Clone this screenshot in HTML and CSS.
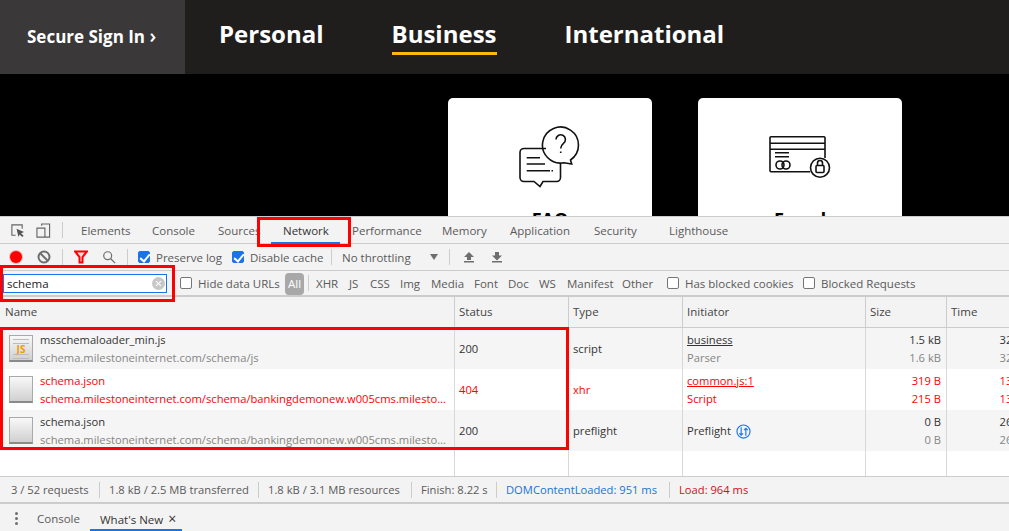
FILE: index.html
```html
<!DOCTYPE html>
<html lang="en">
<head>
    <meta charset="UTF-8">
    <meta name="viewport" content="width=device-width, initial-scale=1.0">
    <title>Schema network request</title>
    <link rel="stylesheet" href="styles.css">
</head>
<body>
    <div class="site">
        <header class="site-header">
            <a class="sign-in">Secure Sign In <span class="sign-in-arrow">&#8250;</span></a>
            <nav class="site-nav">
                <a>Personal</a>
                <a class="current">Business</a>
                <a>International</a>
            </nav>
        </header>
        <div class="cards">
            <div class="card">
                <svg class="card-icon" viewBox="0 0 62 62">
                    <path d="M27 22.5H5a4 4 0 0 0-4 4V51.500a4 4 0 0 0 4 4H15L21 60.500 24 55.500H37.500a4 4 0 0 0 4-4V37"/>
                    <path d="M52.700 38 51.500 34A18 18 0 1 0 45 36.700Z"/>
                    <path d="M37 13.500a4.700 4.700 0 1 1 7.500 3.800C42.500 18.800 41.700 19.800 41.700 22.500M41.700 25.500V27"/>
                    <path d="M7.700 31.700H21M7.700 38H26M7.700 44.700H31M32.500 44.700H34"/>
                </svg>
                <div class="card-title">FAQ</div>
            </div>
            <div class="card">
                <svg class="card-icon" viewBox="0 -9 62 62">
                    <path d="M41 36.700H2a1 1 0 0 1-1-1V2.700a1 1 0 0 1 1-1H55a1 1 0 0 1 1 1V23"/>
                    <path d="M1 8.300H56M1 14.300H56M6 17.700H20M6 21.700H20"/>
                    <circle cx="11" cy="30" r="4"/>
                    <circle cx="17" cy="30" r="4"/>
                    <circle cx="51" cy="32.700" r="9.500"/>
                    <rect x="47" y="30.500" width="8" height="7" rx="1"/>
                    <path d="M48.500 30.500V28a2.500 2.500 0 0 1 5 0V30.500"/>
                </svg>
                <div class="card-title">Fraud</div>
            </div>
        </div>
    </div>

    <div class="devtools">
        <div class="tab-row">
            <div class="tab-tools">
                <svg class="tool" viewBox="0 0 16 16">
                    <path class="line-gray" d="M6 13H2V2H13V6"/>
                    <path class="fill-gray" d="M7 6 15 9.500 11.800 10.800 14.500 13.500 13 15 10.300 12.300 9 15Z"/>
                </svg>
                <svg class="tool" viewBox="0 0 16 16">
                    <path class="line-gray" d="M6 3V1H14.500V15H6M1 5.500H9.500V15H1Z"/>
                </svg>
                <span class="sep"></span>
            </div>
            <div class="tabs">
                <span>Elements</span>
                <span>Console</span>
                <span>Sources</span>
                <span class="tab-active">Network</span>
                <span>Performance</span>
                <span>Memory</span>
                <span>Application</span>
                <span>Security</span>
                <span>Lighthouse</span>
            </div>
        </div>

        <div class="toolbar">
            <span class="record"></span>
            <svg class="clear-log" viewBox="0 0 14 14">
                <circle cx="7" cy="7" r="5.500"/>
                <path d="M3 3 11 11"/>
            </svg>
            <span class="sep sep-a"></span>
            <svg class="funnel" viewBox="0 0 14 14">
                <path d="M1 1.500H13L8.500 7V12.500H5.500V7Z"/>
            </svg>
            <svg class="search" viewBox="0 0 16 16">
                <circle cx="6.500" cy="6.500" r="4.500"/>
                <path d="M10 10 15 15"/>
            </svg>
            <span class="sep sep-b"></span>
            <label class="check check-preserve"><span class="box checked"></span>Preserve log</label>
            <label class="check check-cache"><span class="box checked"></span>Disable cache</label>
            <span class="sep sep-c"></span>
            <span class="throttle">No throttling</span>
            <span class="throttle-arrow"></span>
            <span class="sep sep-d"></span>
            <svg class="transfer" viewBox="0 0 12 12"><path d="M6 1 11 6H8V9H4V6H1ZM1 10H11V11.500H1Z"/></svg>
            <svg class="transfer transfer-down" viewBox="0 0 12 12"><path d="M4 1H8V4.500H11L6 9.500 1 4.500H4ZM1 10H11V11.500H1Z"/></svg>
        </div>

        <div class="filter-row">
            <div class="filter-input">schema<span class="filter-clear"></span></div>
            <label class="check check-hide"><span class="box"></span>Hide data URLs</label>
            <span class="pill">All</span>
            <span class="sep"></span>
            <div class="types">
                <span>XHR</span>
                <span>JS</span>
                <span>CSS</span>
                <span>Img</span>
                <span>Media</span>
                <span>Font</span>
                <span>Doc</span>
                <span>WS</span>
                <span>Manifest</span>
                <span>Other</span>
            </div>
            <label class="check check-cookies"><span class="box"></span>Has blocked cookies</label>
            <label class="check"><span class="box"></span>Blocked Requests</label>
        </div>

        <div class="net-table">
            <div class="net-row net-head">
                <div class="name-head">Name</div>
                <div>Status</div>
                <div>Type</div>
                <div>Initiator</div>
                <div>Size</div>
                <div>Time</div>
            </div>

            <div class="net-row alt">
                <div class="name-cell">
                    <span class="file-icon js-file"><span class="js-label">JS</span></span>
                    <div class="two-line">
                        <span>msschemaloader_min.js</span>
                        <span class="sub">schema.milestoneinternet.com/schema/js</span>
                    </div>
                </div>
                <div class="mid">200</div>
                <div class="mid">script</div>
                <div class="two-line">
                    <span class="link">business</span>
                    <span class="sub">Parser</span>
                </div>
                <div class="two-line num">
                    <span>1.5 kB</span>
                    <span class="sub">1.6 kB</span>
                </div>
                <div class="two-line num">
                    <span>32 ms</span>
                    <span class="sub">32 ms</span>
                </div>
            </div>

            <div class="net-row failed">
                <div class="name-cell">
                    <span class="file-icon"></span>
                    <div class="two-line">
                        <span>schema.json</span>
                        <span class="sub">schema.milestoneinternet.com/schema/bankingdemonew.w005cms.milestone</span>
                    </div>
                </div>
                <div class="mid">404</div>
                <div class="mid">xhr</div>
                <div class="two-line">
                    <span class="link">common.js:1</span>
                    <span class="sub">Script</span>
                </div>
                <div class="two-line num">
                    <span>319 B</span>
                    <span class="sub">215 B</span>
                </div>
                <div class="two-line num">
                    <span>13 ms</span>
                    <span class="sub">13 ms</span>
                </div>
            </div>

            <div class="net-row alt">
                <div class="name-cell">
                    <span class="file-icon"></span>
                    <div class="two-line">
                        <span>schema.json</span>
                        <span class="sub">schema.milestoneinternet.com/schema/bankingdemonew.w005cms.milestone</span>
                    </div>
                </div>
                <div class="mid">200</div>
                <div class="mid">preflight</div>
                <div class="mid preflight">
                    Preflight
                    <svg class="preflight-icon" viewBox="0 0 16 16">
                        <circle cx="8" cy="8" r="7"/>
                        <path d="M5.500 3.500V12M3.500 10 5.500 12 7.500 10M10.500 12.500V4.500M8.500 6.500 10.500 4.500 12.500 6.500"/>
                    </svg>
                </div>
                <div class="two-line num">
                    <span>0 B</span>
                    <span class="sub">0 B</span>
                </div>
                <div class="two-line num">
                    <span>26 ms</span>
                    <span class="sub">26 ms</span>
                </div>
            </div>

            <div class="net-row net-empty">
                <div></div><div></div><div></div><div></div><div></div><div></div>
            </div>
        </div>

        <div class="status-bar">
            <span>3 / 52 requests</span>
            <span>1.8 kB / 2.5 MB transferred</span>
            <span>1.8 kB / 3.1 MB resources</span>
            <span>Finish: 8.22 s</span>
            <span class="dom-loaded">DOMContentLoaded: 951 ms</span>
            <span class="load">Load: 964 ms</span>
        </div>

        <div class="drawer">
            <span class="dots"><i></i><i></i><i></i></span>
            <span class="drawer-tab">Console</span>
            <span class="drawer-tab drawer-active">What's New <span class="drawer-close">&#215;</span></span>
        </div>

        <!-- red annotation boxes drawn on top of the screenshot -->
        <div class="mark mark-tab"></div>
        <div class="mark mark-filter"></div>
        <div class="mark mark-rows"></div>
    </div>
</body>
</html>
```

FILE: styles.css
```css
/* --- General --- */
* {
    margin: 0;
    padding: 0;
    box-sizing: border-box;
}

html, body {
    height: 531px;
    overflow: hidden;
}

body {
    display: flex;
    flex-direction: column;
    background: #000;
    font-family: 'Open Sans', 'Noto Sans', sans-serif;
}

/* --- Website behind devtools --- */
.site {
    height: 216px;
    overflow: hidden;
    background: #000;
}

.site-header {
    height: 74px;
    display: flex;
    background: #1f1e1c;
    color: #fff;
    font-weight: 700;
}

.sign-in {
    width: 185px;
    padding-left: 27px;
    background: #3a3839;
    font-size: 17px;
    line-height: 74px;
}

.sign-in-arrow {
    font-size: 20px;
    font-weight: 600;
    line-height: 1;
}

.site-nav {
    display: flex;
    gap: 68px;
    padding: 17px 0 0 34px;
    font-size: 24px;
    line-height: 34px;
}

.site-nav a {
    height: 38px;
}

.site-nav .current {
    border-bottom: 3px solid #fbb80f;
}

.cards {
    display: flex;
    gap: 46px;
    padding: 24px 0 0 448px;
}

.card {
    width: 204px;
    height: 160px;
    padding-top: 28px;
    background: #fff;
    border-radius: 5px;
    text-align: center;
}

.card-icon {
    display: block;
    width: 62px;
    height: 62px;
    margin: 0 auto;
    fill: none;
    stroke: #111;
    stroke-width: 1.6;
}

.card-title {
    margin-top: 19px;
    color: #000;
    font-size: 18px;
    font-weight: 700;
    line-height: 24px;
}

/* --- Devtools panel --- */
.devtools {
    position: relative;
    flex: 1;
    display: flex;
    flex-direction: column;
    background: #f3f3f3;
    color: #5a5a5a;
    font-size: 11.5px;
    border-top: 1px solid #ccc;
}

.tab-row {
    height: 27px;
    display: flex;
    align-items: center;
    border-bottom: 1px solid #ccc;
}

.tab-tools {
    width: 81px;
    display: flex;
    align-items: center;
    gap: 11px;
    padding-left: 10px;
}

.tool {
    width: 15px;
    height: 15px;
}

.line-gray {
    fill: none;
    stroke: #666;
    stroke-width: 1.2;
}

.fill-gray {
    fill: #555;
}

.tabs {
    flex: 1;
    height: 100%;
    display: grid;
    grid-template-columns: 71px 66px 65px 69px 90px 68px 84px 75px 1fr;
    line-height: 27px;
}

.tab-active {
    position: relative;
    color: #333;
}

.tab-active::after {
    content: "";
    position: absolute;
    left: -12px;
    width: 69px;
    bottom: 0;
    height: 2px;
    background: #1a73e8;
}

.toolbar {
    height: 27px;
    display: flex;
    align-items: center;
    padding-left: 10px;
    border-bottom: 1px solid #ccc;
}

.record {
    width: 12px;
    height: 12px;
    border-radius: 50%;
    background: #f00;
    box-shadow: 0 0 0 1px #f7b5b5;
}

.clear-log {
    width: 14px;
    height: 14px;
    margin-left: 15px;
    fill: none;
    stroke: #6e6e6e;
    stroke-width: 2;
}

.sep {
    width: 1px;
    height: 16px;
    background: #ccc;
    flex: none;
}

.sep-a {
    margin: 0 11px;
}

.funnel {
    width: 14px;
    height: 14px;
    fill: #fdd;
    stroke: #f00;
    stroke-width: 2;
}

.search {
    width: 14px;
    height: 14px;
    margin-left: 14px;
    fill: none;
    stroke: #6e6e6e;
    stroke-width: 1.4;
}

.sep-b {
    margin: 0 10px 0 11px;
}

.check {
    display: flex;
    align-items: center;
    gap: 6px;
    white-space: nowrap;
}

.box {
    width: 12px;
    height: 12px;
    border: 1px solid #767676;
    border-radius: 2px;
    background: #fff;
}

.box.checked {
    position: relative;
    border-color: #1a73e8;
    background: #1a73e8;
}

.box.checked::after {
    content: "";
    position: absolute;
    left: 3px;
    top: 0;
    width: 4px;
    height: 8px;
    border: solid #fff;
    border-width: 0 2px 2px 0;
    transform: rotate(40deg);
}

.check-preserve {
    width: 94px;
}

.check-cache {
    width: 99px;
}

.sep-c {
    margin-right: 10px;
}

.throttle {
    width: 88px;
}

.throttle-arrow {
    width: 0;
    height: 0;
    border: 4px solid transparent;
    border-top: 6px solid #6e6e6e;
    border-bottom: 0;
}

.sep-d {
    margin: 0 13px 0 11px;
}

.transfer {
    width: 12px;
    height: 12px;
    fill: #6e6e6e;
}

.transfer-down {
    margin-left: 16px;
}

.filter-row {
    height: 26px;
    display: flex;
    align-items: center;
    padding-left: 3px;
    border-bottom: 2px solid #ccc;
}

.filter-input {
    position: relative;
    width: 164px;
    height: 19px;
    padding-left: 3px;
    background: #fff;
    border: 1px solid #1a73e8;
    color: #222;
    line-height: 18px;
}

.filter-clear {
    position: absolute;
    right: 1px;
    top: 2px;
    width: 13px;
    height: 13px;
    border-radius: 50%;
    background: #c8c8c8;
}

.filter-clear::before,
.filter-clear::after {
    content: "";
    position: absolute;
    left: 6px;
    top: 3px;
    width: 1px;
    height: 7px;
    background: #fff;
    transform: rotate(45deg);
}

.filter-clear::after {
    transform: rotate(-45deg);
}

.check-hide {
    width: 105px;
    margin-left: 13px;
}

.pill {
    width: 19px;
    height: 22px;
    margin: 2px 4px 0 0;
    border-radius: 4px;
    background: #a8a8a8;
    color: #fff;
    text-align: center;
    line-height: 21px;
}

.types {
    width: 351px;
    margin-left: 7px;
    display: grid;
    grid-template-columns: 33px 21px 30px 31px 43px 34px 31px 28px 55px 1fr;
}

.check-cookies {
    width: 136px;
}

/* --- Request table --- */
.net-table {
    flex: 1;
    display: flex;
    flex-direction: column;
    background: #fff;
    font-size: 11.2px;
    overflow: hidden;
}

.net-row {
    display: grid;
    grid-template-columns: 455px 114px 114px 183px 81px 90px;
    height: 41px;
    color: #333;
    flex: none;
}

.net-row > div {
    min-width: 0;
    padding: 0 5px 0 4px;
    border-right: 1px solid #d8d8d8;
}

.net-head {
    height: 31px;
    background: #f3f3f3;
    border-bottom: 1px solid #ccc;
    color: #444;
    font-size: 11.5px;
    line-height: 30px;
}

.net-head > div {
    border-right-color: #ccc;
}

.net-row > .name-head {
    padding-left: 5px;
}

.net-row.alt {
    background: #f5f5f5;
}

.net-row.failed,
.net-row.failed .sub {
    color: #f00;
}

.net-empty {
    flex: 1;
}

.mid {
    line-height: 41px;
}

.two-line {
    display: flex;
    flex-direction: column;
    justify-content: center;
    gap: 1px;
    min-width: 0;
    line-height: 17px;
}

.two-line span {
    white-space: nowrap;
    overflow: hidden;
    text-overflow: ellipsis;
}

.sub {
    color: #858585;
}

.num {
    text-align: right;
}

.link {
    text-decoration: underline;
}

.name-cell {
    display: flex;
    align-items: center;
    gap: 7px;
}

.net-row > .name-cell {
    padding-left: 9px;
}

.file-icon {
    position: relative;
    flex: none;
    width: 24px;
    height: 27px;
    border: 1px solid #a9a9a9;
    border-bottom: 2px solid #8a8a8a;
    background: linear-gradient(to bottom, #f8f8f8, #d0d0d0);
}

.js-label {
    position: absolute;
    left: 0;
    right: 0;
    top: 8px;
    color: #f29900;
    font-size: 10px;
    font-weight: 700;
    line-height: 11px;
    text-align: center;
}

.js-file::before,
.js-file::after {
    content: "";
    position: absolute;
    left: 3px;
    right: 3px;
    height: 3px;
    border-top: 1px solid #bbb;
    border-bottom: 1px solid #bbb;
}

.js-file::before {
    top: 3px;
}

.js-file::after {
    bottom: 1px;
}

.preflight-icon {
    width: 15px;
    height: 15px;
    margin-left: 2px;
    vertical-align: -4px;
    fill: none;
    stroke: #1a73e8;
    stroke-width: 1.2;
}

/* --- Status bar and drawer --- */
.status-bar {
    height: 28px;
    flex: none;
    display: grid;
    grid-template-columns: 99px 159px 153px 85px 173px 1fr;
    align-items: center;
    padding-top: 1px;
    background: #f3f3f3;
    border-top: 1px solid #ccc;
    border-bottom: 2px solid #ccc;
    font-size: 11.2px;
    white-space: nowrap;
}

.status-bar span {
    height: 16px;
    padding-left: 9px;
    border-left: 1px solid #ccc;
    line-height: 16px;
}

.status-bar span:first-child {
    padding-left: 11px;
    border-left: 0;
}

.dom-loaded {
    color: #1a73d0;
}

.load {
    color: #d0101a;
}

.drawer {
    height: 27px;
    flex: none;
    display: flex;
}

.dots {
    width: 32px;
    display: flex;
    flex-direction: column;
    align-items: center;
    gap: 2px;
    padding-top: 8px;
}

.dots i {
    width: 3px;
    height: 3px;
    border-radius: 50%;
    background: #6e6e6e;
}

.drawer-tab {
    height: 100%;
    padding: 6px 5px 0;
    line-height: 18px;
    white-space: nowrap;
}

.drawer-active {
    margin-left: 5px;
    padding-left: 10px;
    width: 92px;
    color: #333;
    border-bottom: 2px solid #1a73e8;
}

.drawer-close {
    margin-left: 2px;
    font-size: 14px;
}

/* --- Red annotations --- */
.mark {
    position: absolute;
    border: 3px solid #f00;
}

.mark-tab {
    left: 257px;
    top: 0;
    width: 94px;
    height: 30px;
}

.mark-filter {
    left: 0;
    top: 48px;
    width: 175px;
    height: 37px;
}

.mark-rows {
    left: 0;
    top: 110px;
    width: 569px;
    height: 123px;
}
```
